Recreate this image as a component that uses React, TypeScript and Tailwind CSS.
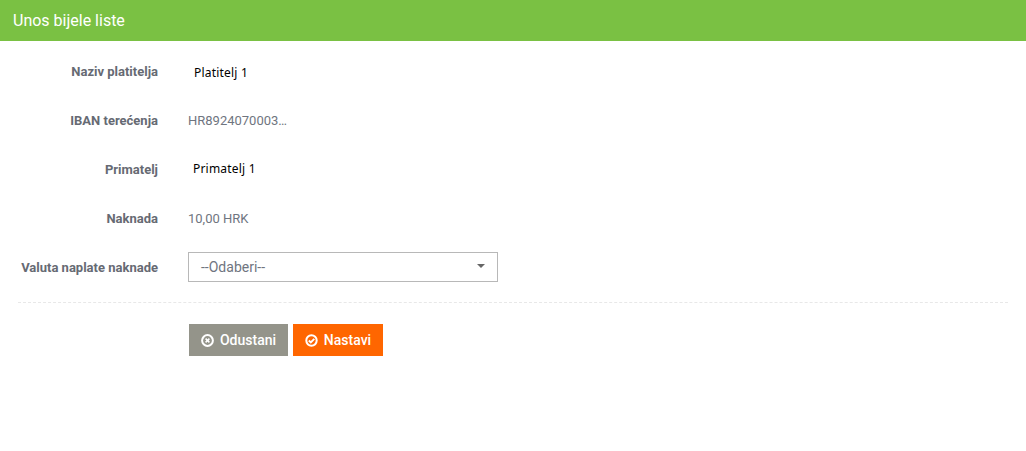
import React from 'react';

const rowClass = 'flex items-center h-[49px]';
const labelClass = 'w-[158px] shrink-0 text-right text-[13px] font-bold text-[#666a73]';

const CancelIcon = () => (
  <svg width="13" height="13" viewBox="0 0 13 13" fill="none">
    <circle cx="6.5" cy="6.5" r="5.4" stroke="white" strokeWidth="2" />
    <path d="M4.6 4.6l3.8 3.8M8.4 4.6L4.6 8.4" stroke="white" strokeWidth="1.5" />
  </svg>
);

const CheckIcon = () => (
  <svg width="13" height="13" viewBox="0 0 13 13" fill="none">
    <circle cx="6.5" cy="6.5" r="5.2" stroke="white" strokeWidth="2" />
    <path d="M3.8 6.5l2 2 3.5-3.7" stroke="white" strokeWidth="1.9" />
  </svg>
);

const App: React.FC = () => {
  return (
    <div className="min-h-[451px] bg-white font-['Roboto',sans-serif]">
      {/* Header */}
      <div className="h-[41px] bg-[#7ac143] flex items-center pl-[13px] text-[16px] font-normal text-white">
        Unos bijele liste
      </div>

      {/* Form */}
      <div className="pt-[6px]">
        <div className={rowClass}>
          <div className={labelClass}>Naziv platitelja</div>
          <div className="ml-[36px] mt-[2px] text-[12px] tracking-[0.2px] text-black font-['Noto_Sans',sans-serif]">Platitelj 1</div>
        </div>
        <div className={rowClass}>
          <div className={labelClass}>IBAN terećenja</div>
          <div className="ml-[30px] text-[13px] text-[#6f7580]">HR8924070003…</div>
        </div>
        <div className={rowClass}>
          <div className={labelClass}>Primatelj</div>
          <div className="ml-[35px] mb-[2px] text-[12px] tracking-[0.2px] text-black font-['Noto_Sans',sans-serif]">Primatelj 1</div>
        </div>
        <div className={rowClass}>
          <div className={labelClass}>Naknada</div>
          <div className="ml-[30px] text-[13px] text-[#6f7580]">10,00 HRK</div>
        </div>
        <div className={rowClass}>
          <div className={labelClass}>Valuta naplate naknade</div>
          <div className="ml-[30px] mb-[2px] w-[310px] h-[30px] border border-[#b8b8b8] flex items-center justify-between pl-[12px] pr-[12px] text-[14px] text-[#6f7580]">
            <span className="mt-[2px]">--Odaberi--</span>
            <span className="mb-[2px] w-0 h-0 border-x-[4px] border-x-transparent border-t-[4px] border-t-[#666666]" />
          </div>
        </div>
      </div>

      {/* Divider */}
      <div className="mx-[18px] mt-[10px] border-t border-dashed border-[#e8e8e8]" />

      {/* Actions */}
      <div className="flex gap-[5px] pl-[189px] mt-[21px]">
        <button className="h-[32px] w-[99px] bg-[#94948a] text-white text-[14px] font-medium flex items-center justify-center gap-[6px]">
          <CancelIcon />
          Odustani
        </button>
        <button className="h-[32px] w-[90px] bg-[#ff6600] text-white text-[14px] font-medium flex items-center justify-center gap-[6px]">
          <CheckIcon />
          Nastavi
        </button>
      </div>
    </div>
  );
};

export default App;
